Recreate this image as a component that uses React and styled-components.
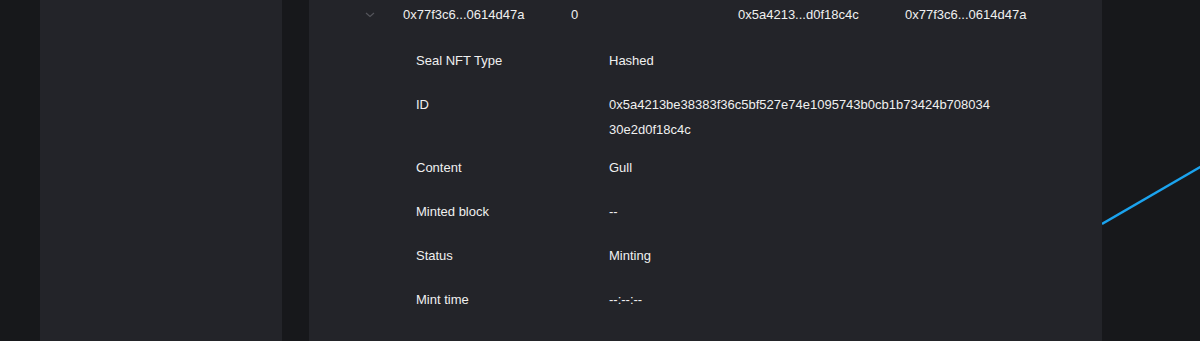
import styled, { createGlobalStyle } from "styled-components";

const GlobalStyle = createGlobalStyle`
    html, body {
        margin: 0;
        padding: 0;
        background: #17181b;
        overflow: hidden;
    }
    #root {
        height: 100vh;
    }
`;

const header = ["0x77f3c6...0614d47a", "0", "0x5a4213...d0f18c4c", "0x77f3c6...0614d47a"];

const details = [
    { label: "Seal NFT Type", value: "Hashed" },
    { label: "ID", value: "0x5a4213be38383f36c5bf527e74e1095743b0cb1b73424b70803430e2d0f18c4c" },
    { label: "Content", value: "Gull" },
    { label: "Minted block", value: "--" },
    { label: "Status", value: "Minting" },
    { label: "Mint time", value: "--:--:--" },
];

const Chevron = () => (
    <svg width="10" height="6" viewBox="0 0 10 6" fill="none">
        <path d="M1 1l4 3.5L9 1" stroke="#55565c" strokeWidth="1.1" />
    </svg>
);

const App = () => {
    return (
        <Page>
            <GlobalStyle />

            <SidePanel />

            <MainPanel>
                <HeadRow>
                    <ToggleCell>
                        <Chevron />
                    </ToggleCell>
                    {header.map((text, i) => (
                        <Cell key={i}>{text}</Cell>
                    ))}
                </HeadRow>

                <Details>
                    {details.map((row) => (
                        <DetailRow key={row.label}>
                            <Label>{row.label}</Label>
                            <Value>{row.value}</Value>
                        </DetailRow>
                    ))}
                </Details>
            </MainPanel>

            <ChartArea>
                <svg width="100%" height="100%" viewBox="0 0 98 341" preserveAspectRatio="none">
                    <line x1="0" y1="224" x2="100" y2="166" stroke="#1ba3ee" strokeWidth="2.4" />
                </svg>
            </ChartArea>
        </Page>
    );
}

export default App;

const Page = styled.div`
    display: flex;
    height: 100%;
    padding-left: 40px;
    box-sizing: border-box;
    font-family: "Liberation Sans", Arial, sans-serif;
    font-size: 13px;
    color: #f0f0f0;
`;

const SidePanel = styled.div`
    width: 242px;
    flex-shrink: 0;
    background: #232429;
    margin-right: 27px;
`;

const MainPanel = styled.div`
    width: 793px;
    flex-shrink: 0;
    background: #232429;
`;

const HeadRow = styled.div`
    display: grid;
    grid-template-columns: 94px 168px 167px 167px 1fr;
    align-items: center;
    height: 28px;
`;

const ToggleCell = styled.div`
    display: flex;
    align-items: center;
    padding-left: 56px;
    padding-top: 2px;
`;

const Cell = styled.div`
    white-space: nowrap;
`;

const Details = styled.div`
    display: flex;
    flex-direction: column;
    margin-top: 10px;
    padding-left: 107px;
`;

const DetailRow = styled.div`
    display: flex;
    align-items: flex-start;
    min-height: 44px;
    box-sizing: border-box;
    padding: 10px 0 3px;
    line-height: 25px;
`;

const Label = styled.div`
    width: 193px;
    flex-shrink: 0;
`;

const Value = styled.div`
    width: 386px;
    word-break: break-all;
`;

const ChartArea = styled.div`
    flex: 1;
    height: 100%;
`;
